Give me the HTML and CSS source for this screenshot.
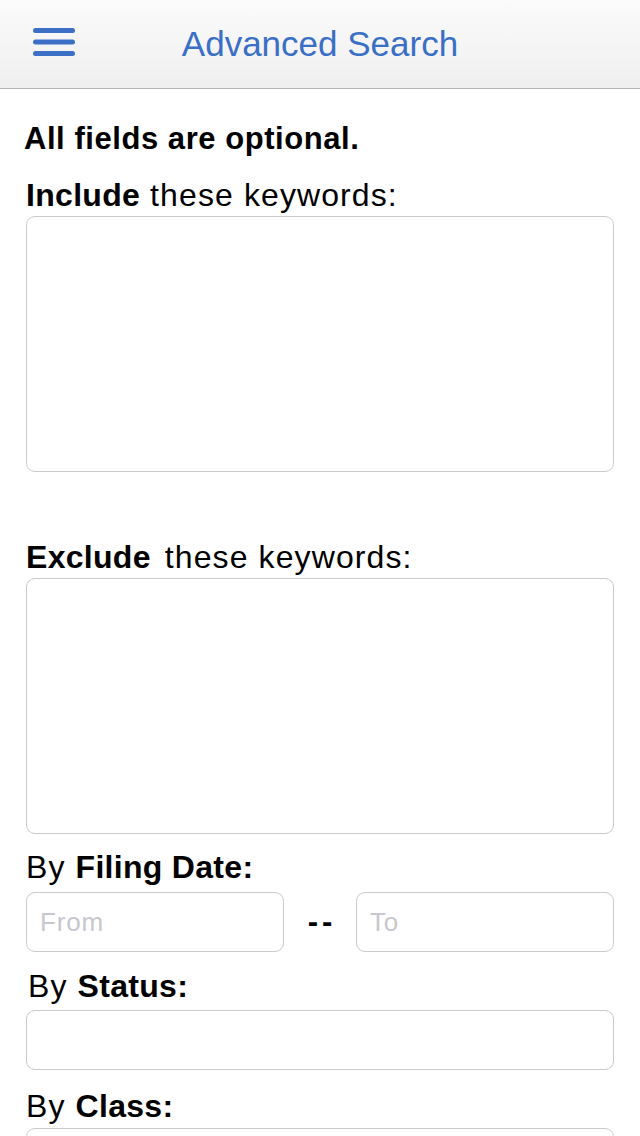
FILE: index.html
```html
<!DOCTYPE html>
<html lang="en">
<head>
<meta charset="utf-8">
<title>Advanced Search</title>
<link rel="stylesheet" href="styles.css">
</head>
<body>
<header class="topbar">
  <div class="menu-cell">
    <svg class="menu-icon" width="42" height="29" viewBox="0 0 42 29" aria-label="Menu">
      <rect x="0" y="0" width="42" height="5" rx="2.5"/>
      <rect x="0" y="11.5" width="42" height="5" rx="2.5"/>
      <rect x="0" y="23" width="42" height="5" rx="2.5"/>
    </svg>
  </div>
  <h1 class="title">Advanced Search</h1>
  <div class="spacer"></div>
</header>
<main class="form">
  <p class="note">All fields are optional.</p>

  <label class="label label-include"><b>Include</b> these keywords:</label>
  <textarea class="area"></textarea>

  <label class="label label-exclude"><b class="gap">Exclude</b> these keywords:</label>
  <textarea class="area"></textarea>

  <label class="label label-date">By <b>Filing Date:</b></label>
  <div class="date-row">
    <input class="field" type="text" placeholder="From">
    <span class="dash">--</span>
    <input class="field" type="text" placeholder="To">
  </div>

  <label class="label label-status">By <b>Status:</b></label>
  <input class="field field-wide" type="text">

  <label class="label label-class">By <b>Class:</b></label>
  <input class="field field-wide" type="text">
</main>
</body>
</html>
```

FILE: styles.css
```css
html, body {
  margin: 0;
  padding: 0;
  background: #ffffff;
}

body {
  width: 640px;
  height: 1136px;
  overflow: hidden;
  font-family: "Liberation Sans", Arial, sans-serif;
  color: #000;
}

.topbar {
  height: 88px;
  border-bottom: 1px solid #b4b4b4;
  background: linear-gradient(to bottom, #fbfbfb 0%, #f0eff0 100%);
  display: grid;
  grid-template-columns: 1fr auto 1fr;
  align-items: start;
}

.menu-cell {
  padding: 28px 0 0 33px;
}

.menu-icon {
  display: block;
  fill: #3c6fc6;
}

.title {
  margin: 0;
  font-size: 35px;
  line-height: 88px;
  font-weight: 400;
  color: #3a6fc6;
  white-space: nowrap;
}

.form {
  padding: 32px 26px 0 26px;
}

.note {
  margin: 0 0 20px -2px;
  font-size: 31px;
  line-height: 36px;
  font-weight: 700;
  letter-spacing: 0.55px;
}

.label {
  display: block;
  font-size: 32px;
  line-height: 36px;
  font-weight: 400;
  letter-spacing: 1.1px;
}

.label b {
  font-weight: 700;
  letter-spacing: 0.3px;
}

.label .gap {
  margin-right: 4px;
}

.label-include {
  margin-bottom: 3px;
}

.label-exclude {
  margin-top: 67px;
  margin-bottom: 3px;
}

.label-date {
  margin-top: 15px;
  margin-bottom: 7px;
}

.label-status {
  margin-top: 16px;
  margin-bottom: 6px;
  padding-left: 2px;
}

.label-class {
  margin-top: 18px;
  margin-bottom: 4px;
}

.area {
  display: block;
  box-sizing: border-box;
  width: 588px;
  height: 256px;
  margin: 0;
  border: 1px solid #cacaca;
  border-radius: 9px;
  background: #fff;
  resize: none;
  outline: none;
}

.date-row {
  display: flex;
  align-items: center;
  width: 588px;
}

.field {
  display: block;
  box-sizing: border-box;
  width: 258px;
  height: 60px;
  margin: 0;
  padding: 0 0 0 13px;
  border: 1px solid #cacaca;
  border-radius: 9px;
  background: #fff;
  font-family: "Liberation Sans", Arial, sans-serif;
  font-size: 26px;
  letter-spacing: 0.8px;
  color: #000;
  outline: none;
}

.field::placeholder {
  color: #c7c7cd;
}

.field-wide {
  width: 588px;
}

.dash {
  flex: 1;
  text-align: center;
  font-size: 31px;
  font-weight: 700;
  letter-spacing: 4px;
  padding-left: 4px;
  line-height: 60px;
}
```
